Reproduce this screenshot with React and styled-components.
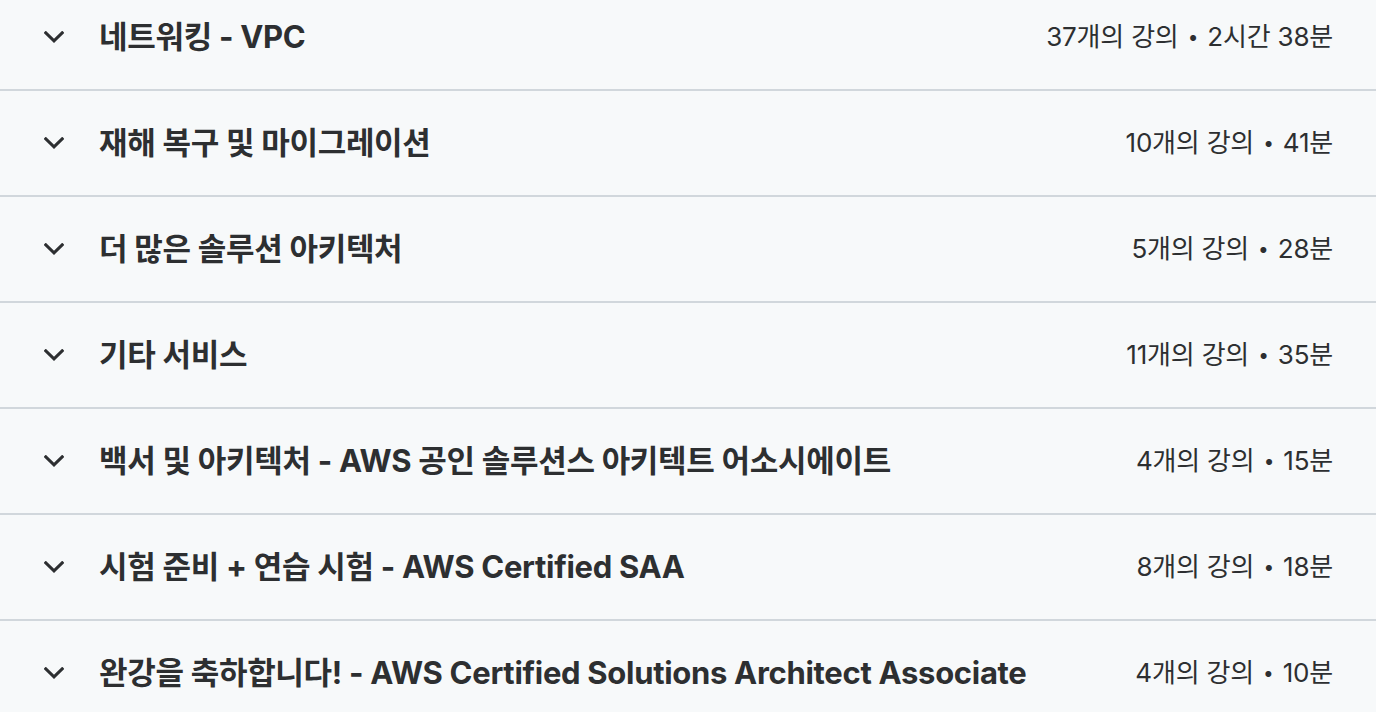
import React from "react";
import styled, { createGlobalStyle } from "styled-components";

const GlobalStyle = createGlobalStyle`
  html, body {
    margin: 0;
    padding: 0;
    background-color: #f7f9fa;
    overflow: hidden;
  }
  body {
    font-family: Inter, "Noto Sans CJK KR", sans-serif;
    color: #2d2f31;
  }
`;

const List = styled.div`
  display: flex;
  flex-direction: column;
  margin-top: -15px;
`;

const Row = styled.div`
  display: flex;
  align-items: center;
  height: 98px;
  padding: 0 43px 6px 44px;
  border-bottom: 2px solid #d1d7dc;
  background-color: #f7f9fa;
`;

const Chevron = styled.svg`
  width: 20px;
  height: 12px;
  flex-shrink: 0;
  margin: 5px 35px 0 0;
`;

const Title = styled.h3`
  margin: 0;
  flex: 1;
  font-size: 31px;
  font-weight: 700;
  letter-spacing: -0.3px;
  white-space: nowrap;
`;

const Meta = styled.span`
  font-size: 26px;
  font-weight: 400;
  letter-spacing: -0.2px;
  white-space: nowrap;
`;

const Dot = styled.span`
  font-size: 19px;
  vertical-align: 2px;
  margin: 0 2px;
`;

const sections = [
  { title: "네트워킹 - VPC", count: 37, time: "2시간 38분" },
  { title: "재해 복구 및 마이그레이션", count: 10, time: "41분" },
  { title: "더 많은 솔루션 아키텍처", count: 5, time: "28분" },
  { title: "기타 서비스", count: 11, time: "35분" },
  {
    title: "백서 및 아키텍처 - AWS 공인 솔루션스 아키텍트 어소시에이트",
    count: 4,
    time: "15분",
  },
  { title: "시험 준비 + 연습 시험 - AWS Certified SAA", count: 8, time: "18분" },
  {
    title: "완강을 축하합니다! - AWS Certified Solutions Architect Associate",
    count: 4,
    time: "10분",
  },
];

const ChevronDown = () => (
  <Chevron viewBox="0 0 20 12" fill="none">
    <path
      d="M1.8 1.8 L10 9.8 L18.2 1.8"
      stroke="#2d2f31"
      strokeWidth="3"
      strokeLinecap="square"
    />
  </Chevron>
);

const App = () => {
  return (
    <>
      <GlobalStyle />
      <List>
        {sections.map(s => (
          <Row key={s.title}>
            <ChevronDown />
            <Title>{s.title}</Title>
            <Meta>
              {s.count}개의 강의 <Dot>•</Dot> {s.time}
            </Meta>
          </Row>
        ))}
      </List>
    </>
  );
};

export default App;
